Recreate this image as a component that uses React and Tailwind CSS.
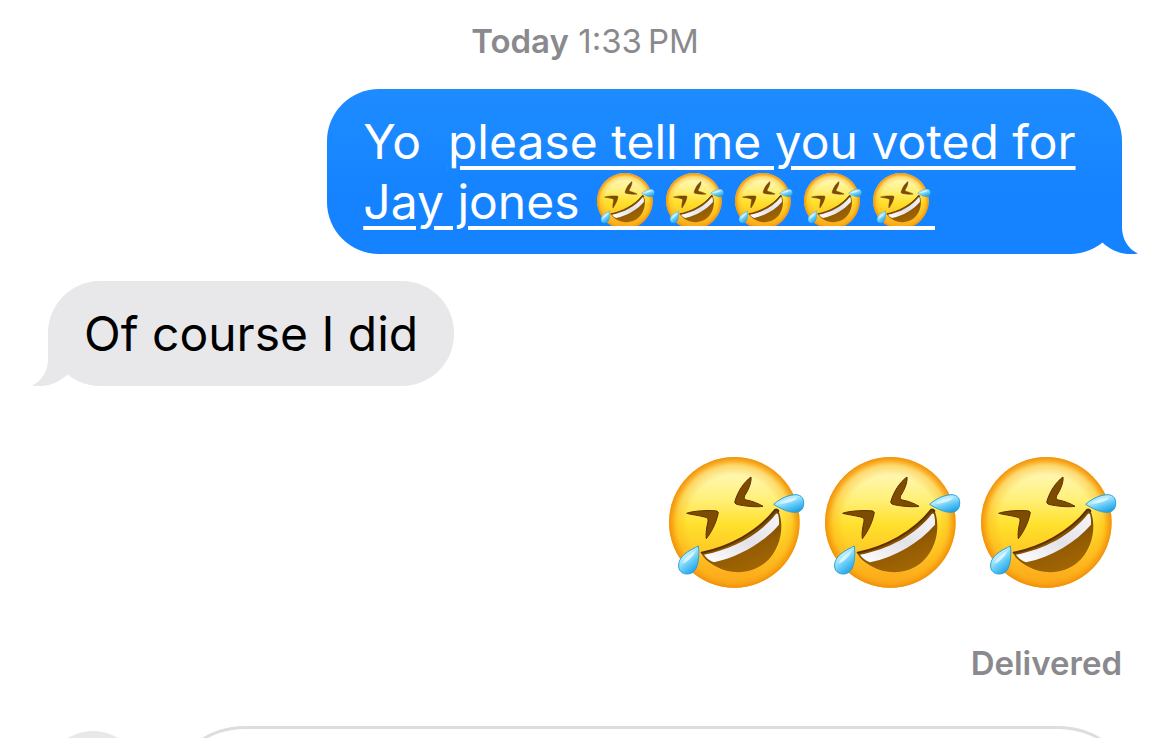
import React from 'react';

const SMALL_EMOJIS = 5;
const LARGE_EMOJIS = 3;

/**
 * Gradients shared by every emoji on the page
 */
function EmojiDefs() {
  return (
    <svg className="absolute w-0 h-0" aria-hidden="true">
      <defs>
        <linearGradient id="face" x1="0" y1="0" x2="0" y2="1">
          <stop offset="0" stopColor="#fff3a0" />
          <stop offset="0.14" stopColor="#fff7ae" />
          <stop offset="0.32" stopColor="#fff07a" />
          <stop offset="0.52" stopColor="#ffe02c" />
          <stop offset="0.75" stopColor="#ffc624" />
          <stop offset="1" stopColor="#fba01a" />
        </linearGradient>
        <radialGradient id="rim" cx="0.5" cy="0.5" r="0.5">
          <stop offset="0.72" stopColor="#f9a612" stopOpacity="0" />
          <stop offset="0.87" stopColor="#fbb01a" stopOpacity="0.4" />
          <stop offset="0.94" stopColor="#f9a211" stopOpacity="0.85" />
          <stop offset="1" stopColor="#f0900c" stopOpacity="1" />
        </radialGradient>
        <linearGradient id="mouth" x1="0.3" y1="0.2" x2="0.7" y2="1">
          <stop offset="0" stopColor="#6e3f00" />
          <stop offset="0.6" stopColor="#955c02" />
          <stop offset="1" stopColor="#a46804" />
        </linearGradient>
        <linearGradient id="teeth" x1="0" y1="1" x2="1" y2="0">
          <stop offset="0" stopColor="#ffffff" />
          <stop offset="0.5" stopColor="#e3e2e9" />
          <stop offset="1" stopColor="#f6f6fa" />
        </linearGradient>
        <linearGradient id="tear" x1="0.1" y1="0" x2="0.7" y2="1">
          <stop offset="0" stopColor="#7fd2f4" />
          <stop offset="0.35" stopColor="#b9edff" />
          <stop offset="0.65" stopColor="#62cbf8" />
          <stop offset="1" stopColor="#1f9fe4" />
        </linearGradient>
      </defs>
    </svg>
  );
}

function RoflEmoji({ className }) {
  return (
    <svg viewBox="27 35 408 393" className={className} role="img" aria-label="Rolling on the floor laughing">
      <circle cx="223" cy="231" r="196" fill="url(#face)" />
      <circle cx="223" cy="231" r="196" fill="url(#rim)" />
      {/* Eyes */}
      <g fill="#7d4b02" stroke="#5c3200" strokeWidth="3" strokeLinejoin="round">
        <path d="M80 204C100 196 150 194 170 197Q177 199 174 206C168 235 153 262 139 280Q136 262 144 228C145 220 142 217 134 215C115 210 95 208 80 204Z" />
        <path d="M273 95C275 107 268 130 254 151Q250 161 259 164C280 168 296 175 309 183C290 186 255 183 230 177Q222 174 225 167C234 137 252 110 273 95Z" />
      </g>
      {/* Mouth */}
      <path
        d="M124 322C205 306 292 262 346 192Q353 190 356 197C374 245 362 310 318 350C275 387 215 390 165 362C145 350 129 338 124 322Z"
        fill="url(#mouth)"
      />
      <path
        d="M125 322C205 306 292 262 346 193Q352 191 355 197"
        fill="none"
        stroke="#5c3000"
        strokeWidth="6"
        strokeLinecap="round"
      />
      <path
        d="M132 328C215 312 298 270 348 205Q354 202 355 210Q358 225 357 238C310 292 240 334 162 351Q143 344 132 328Z"
        fill="url(#teeth)"
      />
      {/* Tears */}
      <g fill="url(#tear)" stroke="#2c9fd6" strokeWidth="3" strokeLinejoin="round">
        <path d="M341 177C360 160 385 148 408 148C425 149 432 160 431 176C430 192 420 201 405 201C385 201 362 190 341 177Z" />
        <path d="M115 302C95 312 66 325 58 348C51 368 60 385 80 386C101 387 111 370 114 350C117 332 117 315 115 302Z" />
      </g>
      <path d="M358 175C374 164 392 157 412 158C404 168 380 175 358 175Z" fill="#e2f8ff" opacity="0.8" />
      <path d="M108 314C90 326 73 336 67 356C82 350 100 336 108 314Z" fill="#e2f8ff" opacity="0.8" />
    </svg>
  );
}

function Tail({ className }) {
  return (
    <svg viewBox="0 0 48 56" className={`absolute bottom-0 w-12 h-14 ${className}`} aria-hidden="true">
      <path d="M0 0H32V29C32 41 38 51 48 55.5C34 58 21 53 12 44L0 34Z" fill="currentColor" />
    </svg>
  );
}

function Bubble({ sent, children }) {
  return (
    <div
      className={`
        relative w-fit max-w-[74%] px-9 pt-[23px] pb-[22px] rounded-[52px]
        text-[48px] leading-[60px]
        ${sent
          ? 'self-end bg-linear-to-b from-[#1e8cff] to-[#1583ff] to-65% text-white'
          : 'self-start bg-[#e8e8ea] text-black'}
      `}
    >
      {children}
      {sent
        ? <Tail className="-right-4 text-[#1583ff]" />
        : <Tail className="-left-4 -scale-x-100 text-[#e8e8ea]" />}
    </div>
  );
}

/**
 * Composer bar, partly below the fold
 */
function Composer() {
  return (
    <form className="flex shrink-0 items-center gap-9 pl-[45px] pr-11 mt-[43px]">
      <button type="button" aria-label="Add attachment" className="shrink-0 size-24 rounded-full bg-[#e8e8ea]" />
      <input
        type="text"
        aria-label="Message"
        className="grow min-w-0 h-[106px] px-9 border-3 border-[#dddddd] rounded-[72px_/_56px] text-[48px] outline-none"
      />
    </form>
  );
}

export default function App() {
  return (
    <div className="flex flex-col h-screen overflow-hidden bg-white font-['Inter',sans-serif]">
      <EmojiDefs />
      <main className="flex shrink-0 flex-col px-12 pt-[21px]">
        <p className="text-center text-[33px] leading-10 text-[#8a8a8e]">
          <span className="font-semibold">Today</span> 1:33{'\u202f'}PM
        </p>

        <div className="flex flex-col gap-[27px] mt-7">
          <Bubble sent>
            {'Yo\u00a0 '}
            <span className="underline decoration-4 underline-offset-[7px]">
              {'please tell me you voted for Jay jones '}
            </span>
            <span className="inline-flex gap-[11px] h-[57px] px-1 align-[-10px] overflow-hidden border-b-4 border-white">
              {Array.from({ length: SMALL_EMOJIS }, (_, i) => (
                <RoflEmoji key={i} className="shrink-0 w-[58px] h-14" />
              ))}
            </span>
          </Bubble>
          <Bubble>Of course I did</Bubble>
        </div>

        <div className="flex self-end gap-5 mt-[71px] pr-[5px]">
          {Array.from({ length: LARGE_EMOJIS }, (_, i) => (
            <RoflEmoji key={i} className="w-[136px] h-[131px]" />
          ))}
        </div>

        <p className="self-end mt-[55px] text-[33px] leading-10 font-semibold text-[#8a8a8e]">Delivered</p>
      </main>
      <Composer />
    </div>
  );
}
